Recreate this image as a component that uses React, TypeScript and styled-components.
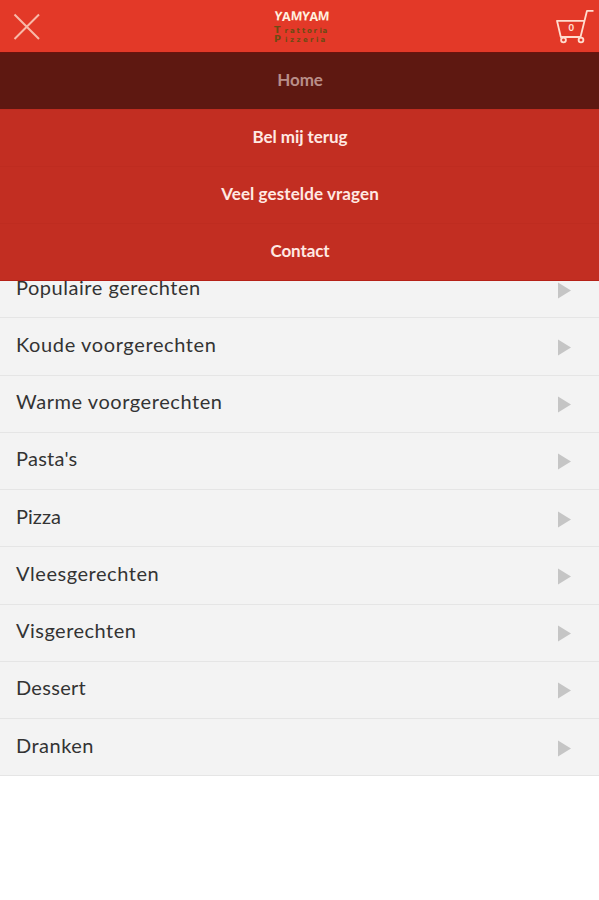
import React from 'react';
import styled, { createGlobalStyle } from 'styled-components';

const GlobalStyle = createGlobalStyle`
  * { box-sizing: border-box; }
  body { margin: 0; background: #fff; font-family: Lato, 'Open Sans', sans-serif; }
`;

const Page = styled.div`
  position: relative;
  height: 900px;
  overflow: hidden;
  background: #fff;
`;

const Header = styled.header`
  display: grid;
  grid-template-columns: 1fr auto 1fr;
  height: 52px;
  background: #e33928;
`;

const IconButton = styled.button<{ $end?: boolean }>`
  display: flex;
  justify-self: ${(p) => (p.$end ? 'end' : 'start')};
  width: 54px;
  height: 52px;
  padding: 0;
  border: 0;
  background: none;
`;

const Logo = styled.svg`
  display: block;
  width: 60px;
  height: 52px;
`;

const Menu = styled.nav`
  position: absolute;
  top: 52px;
  left: 0;
  right: 0;
  z-index: 1;
  display: grid;
  grid-template-rows: repeat(4, 57px);
  background: #c22e22;
  border-bottom: 1px solid #b52117;
`;

const MenuItem = styled.a<{ $active?: boolean; $spacing: number }>`
  display: flex;
  align-items: center;
  justify-content: center;
  padding: 0 0 4px 1px;
  border-top: 1px solid ${(p) => (p.$active ? '#6b130e' : '#be2c20')};
  background: ${(p) => (p.$active ? '#5e1811' : 'transparent')};
  color: ${(p) => (p.$active ? '#b98e89' : '#ffe9e3')};
  font-size: 17px;
  font-weight: 700;
  letter-spacing: ${(p) => p.$spacing}px;
`;

const List = styled.ul`
  margin: 209px 0 0;
  padding: 0;
  list-style: none;
  background: #f3f3f3;
`;

const Row = styled.li<{ $spacing: number }>`
  display: flex;
  align-items: center;
  justify-content: space-between;
  height: 57.25px;
  padding: 0 28px 0 16px;
  border-bottom: 1px solid #e5e5e5;
  color: #333;
  font-size: 20px;
  letter-spacing: ${(p) => p.$spacing}px;
`;

const Label = styled.span`
  padding-bottom: 5px;
`;

const Arrow = styled.svg`
  width: 13px;
  height: 17px;
  margin-top: 2px;
  fill: #c5c5c5;
`;

const menuItems = [
  { label: 'Home', spacing: -0.1, active: true },
  { label: 'Bel mij terug', spacing: -0.05 },
  { label: 'Veel gestelde vragen', spacing: 0.1 },
  { label: 'Contact', spacing: -0.1 },
];

const categories = [
  { label: 'Populaire gerechten', spacing: 0.52 },
  { label: 'Koude voorgerechten', spacing: 0.62 },
  { label: 'Warme voorgerechten', spacing: 0.56 },
  { label: "Pasta's", spacing: 0.25 },
  { label: 'Pizza', spacing: 0.05 },
  { label: 'Vleesgerechten', spacing: 0.55 },
  { label: 'Visgerechten', spacing: 0.48 },
  { label: 'Dessert', spacing: 0.3 },
  { label: 'Dranken', spacing: 0.5 },
];

function CloseIcon() {
  return (
    <svg width="54" height="52" fill="none" stroke="#f8b9a9" strokeWidth="2">
      <path d="M14.5 14.5 39 39M39 14.5 14.5 39" />
    </svg>
  );
}

function CartIcon() {
  return (
    <svg width="54" height="52" fill="none" stroke="#ffddcf" strokeWidth="1.8" strokeLinejoin="round">
      <path d="M48.5 10.8H42L35.5 37H15.8L12 20.8H39.5" />
      <circle cx="18.5" cy="40" r="2.4" fill="#e33928" />
      <circle cx="36" cy="40" r="2.4" fill="#e33928" />
      <text x="26.3" y="31" textAnchor="middle" fontFamily="Lato" fontWeight="900" fontSize="9.5" fill="#ffddcf" stroke="none">0</text>
    </svg>
  );
}

function BrandLogo() {
  return (
    <Logo fontFamily="'DejaVu Sans', sans-serif" fontWeight="700">
      <text
        x="4 12 20.5 31.5 39.5 47.500"
        y="20 20.5 20 20 20.5 20"
        rotate="6 0 3 6 0 3"
        fontFamily="'Open Sans', sans-serif"
        fontSize="12.5"
        fill="#fff0df"
      >
        YAMYAM
      </text>
      <g fill="#6c4b13">
        <text x="4 14.5 20 26.5 32 37 43.5 49.5 52.500" y="32.5" fontSize="7">
          <tspan fontSize="9.5">T</tspan>rattoria
        </text>
        <text x="4 15 20 26.5 33 40 46 50.5" y="42" fontSize="7">
          <tspan fontSize="9.5">P</tspan>izzeria
        </text>
      </g>
    </Logo>
  );
}

export default function App() {
  return (
    <Page>
      <GlobalStyle />
      <Header>
        <IconButton aria-label="Sluiten"><CloseIcon /></IconButton>
        <BrandLogo />
        <IconButton $end aria-label="Winkelwagen"><CartIcon /></IconButton>
      </Header>
      <Menu>
        {menuItems.map((m) => (
          <MenuItem key={m.label} $active={m.active} $spacing={m.spacing}>{m.label}</MenuItem>
        ))}
      </Menu>
      <List>
        {categories.map((c) => (
          <Row key={c.label} $spacing={c.spacing}>
            <Label>{c.label}</Label>
            <Arrow viewBox="0 0 13 17"><path d="M0 0.5 13 8.5 0 16.5Z" /></Arrow>
          </Row>
        ))}
      </List>
    </Page>
  );
}
